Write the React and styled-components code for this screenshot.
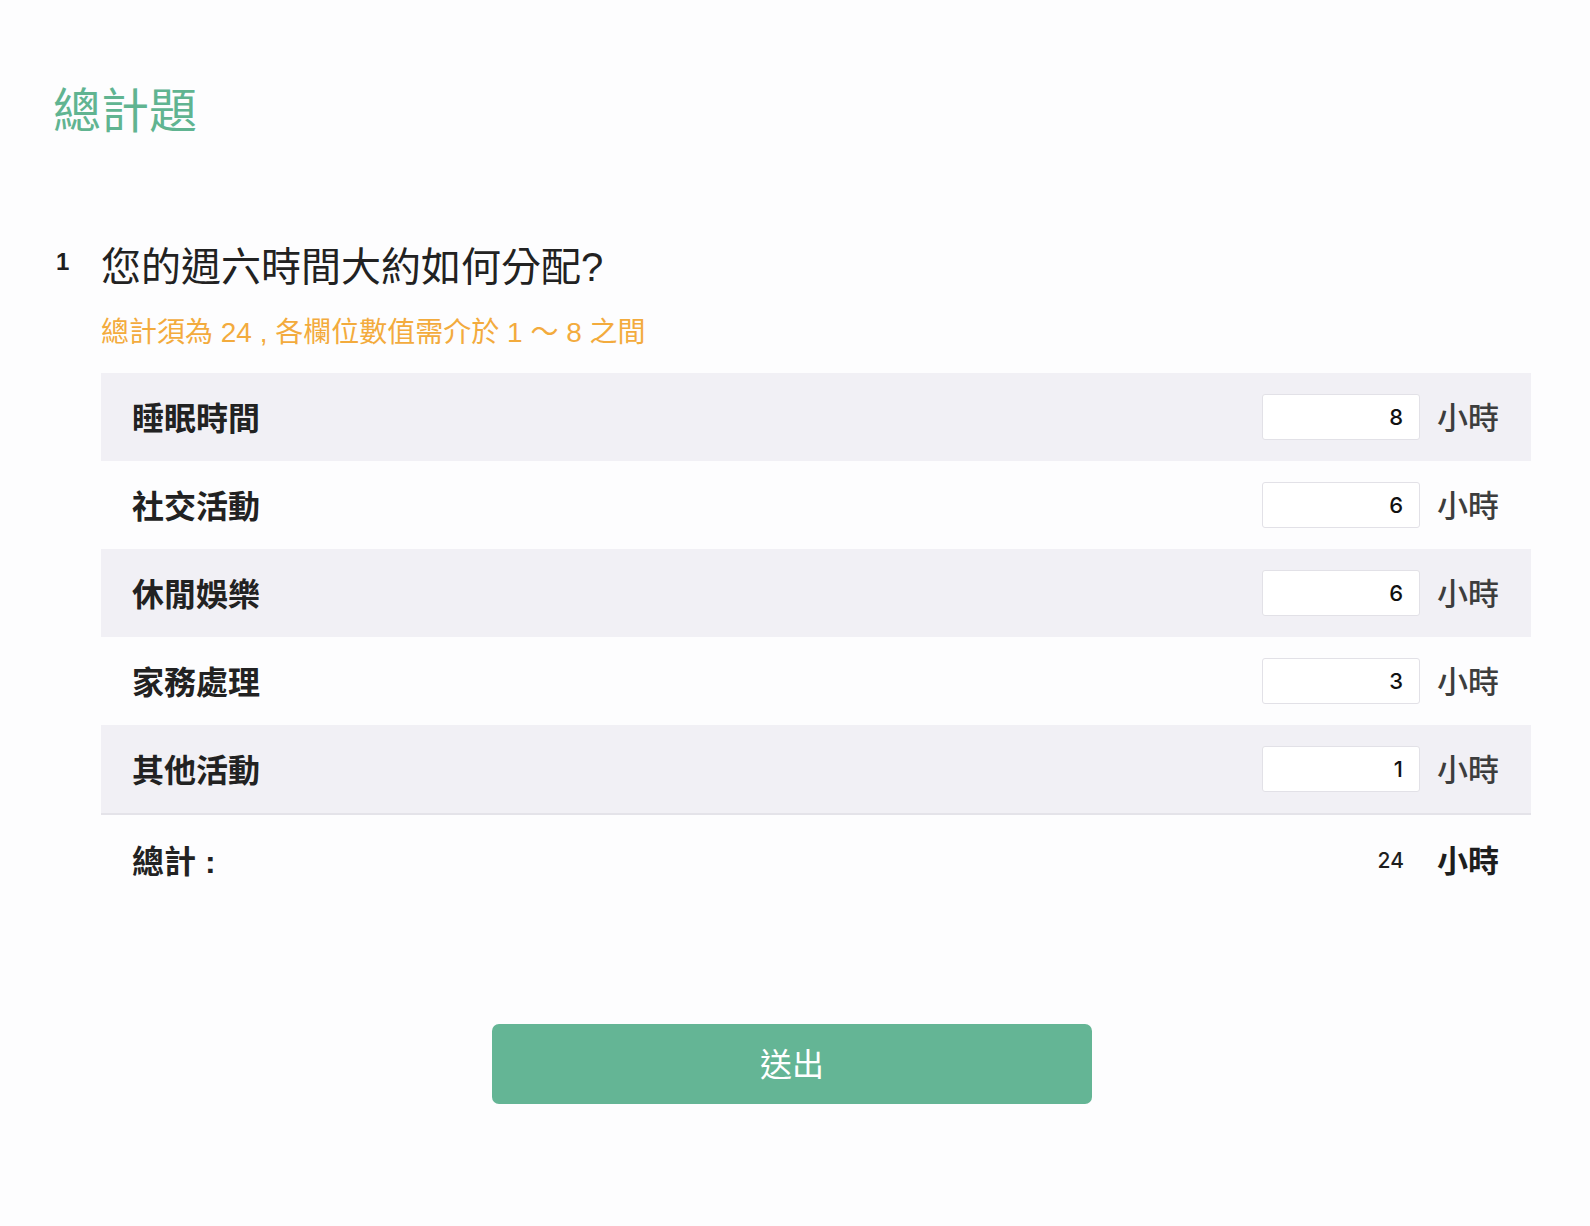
import { useState } from 'react'
import styled, { createGlobalStyle } from 'styled-components'

const GlobalStyle = createGlobalStyle`
  html, body {
    margin: 0;
    padding: 0;
    background: #fdfdfe;
  }
  body {
    font-family: "Liberation Sans", "Noto Sans CJK TC", sans-serif;
    color: #222;
  }
`

const ITEMS = [
  { id: 'sleep', label: '睡眠時間', value: 8 },
  { id: 'social', label: '社交活動', value: 6 },
  { id: 'leisure', label: '休閒娛樂', value: 6 },
  { id: 'house', label: '家務處理', value: 3 },
  { id: 'other', label: '其他活動', value: 1 },
]

export default function App() {
  const [values, setValues] = useState(() =>
    Object.fromEntries(ITEMS.map((item) => [item.id, String(item.value)]))
  )

  const total = Object.values(values).reduce((sum, v) => sum + (parseInt(v, 10) || 0), 0)

  function update(id, v) {
    setValues((prev) => ({ ...prev, [id]: v }))
  }

  return (
    <Page>
      <GlobalStyle />
      <Title>總計題</Title>

      <Question>
        <QuestionNo>1</QuestionNo>
        <Body>
          <QuestionText>您的週六時間大約如何分配?</QuestionText>
          <Hint>總計須為 24 , 各欄位數值需介於 1 ～ 8 之間</Hint>

          <Table>
            {ITEMS.map((item, i) => (
              <Row key={item.id} $striped={i % 2 === 0}>
                <Label>{item.label}</Label>
                <Field>
                  <NumberInput
                    value={values[item.id]}
                    onChange={(e) => update(item.id, e.target.value)}
                  />
                  <Unit>小時</Unit>
                </Field>
              </Row>
            ))}
            <TotalRow>
              <Label>總計 :</Label>
              <Field>
                <TotalValue>{total}</TotalValue>
                <Unit $strong>小時</Unit>
              </Field>
            </TotalRow>
          </Table>
        </Body>
      </Question>

      <Actions>
        <Submit type="button">送出</Submit>
      </Actions>
    </Page>
  )
}

const Page = styled.main`
  padding: 78px 59px 120px 53px;
`

const Title = styled.h1`
  margin: 0;
  font-family: "Noto Sans CJK TC", sans-serif;
  font-size: 48px;
  line-height: 58px;
  font-weight: 400;
  color: #60b491;
`

const Question = styled.section`
  display: flex;
  margin-top: 107px;
`

const QuestionNo = styled.div`
  box-sizing: border-box;
  width: 48px;
  flex: none;
  font-size: 24px;
  font-weight: 700;
  line-height: 48px;
  padding-left: 3px;
  margin-top: -5px;
  color: #1e1e1e;
`

const Body = styled.div`
  flex: 1;
`

const QuestionText = styled.h2`
  margin: 0;
  font-size: 40px;
  line-height: 48px;
  font-weight: 400;
  color: #222;
`

const Hint = styled.p`
  margin: 24px 0 0;
  font-size: 28px;
  line-height: 36px;
  color: #f3ab3d;
`

const Table = styled.div`
  margin-top: 22px;
`

const Row = styled.div`
  display: flex;
  align-items: center;
  justify-content: space-between;
  height: 88px;
  padding: 0 32px 0 31px;
  background: ${(p) => (p.$striped ? '#f1f0f5' : 'transparent')};

  &:nth-child(5) {
    border-bottom: 2px solid #e4e3e9;
  }
`

const TotalRow = styled(Row)`
  height: 90px;
  background: transparent;
`

const Label = styled.div`
  font-size: 32px;
  font-weight: 700;
  color: #222;
  margin-top: -2px;
`

const Field = styled.div`
  display: flex;
  align-items: center;
  gap: 17px;
`

const NumberInput = styled.input`
  box-sizing: border-box;
  width: 158px;
  height: 46px;
  padding: 0 16px;
  border: 1px solid #e2e1e7;
  border-radius: 3px;
  background: #fff;
  font-family: "Inter", "Liberation Sans", sans-serif;
  font-size: 22px;
  font-weight: 500;
  color: #111;
  text-align: right;
  outline: none;

  &:focus {
    border-color: #60b491;
  }
`

const TotalValue = styled.span`
  font-family: "Inter", "Liberation Sans", sans-serif;
  font-size: 21px;
  font-weight: 500;
  color: #1e1e1e;
  padding-right: 16px;
`

const Unit = styled.span`
  font-size: 31px;
  font-weight: ${(p) => (p.$strong ? 600 : 500)};
  color: ${(p) => (p.$strong ? '#1e1e1e' : '#3d3d3d')};
  margin-top: -3px;
`

const Actions = styled.div`
  display: flex;
  justify-content: center;
  margin-top: 119px;
`

const Submit = styled.button`
  width: 600px;
  height: 80px;
  padding: 0 0 4px;
  border: none;
  border-radius: 7px;
  background: #64b595;
  color: #fff;
  font-family: "Noto Sans CJK TC", sans-serif;
  font-size: 32px;
  cursor: pointer;
`
